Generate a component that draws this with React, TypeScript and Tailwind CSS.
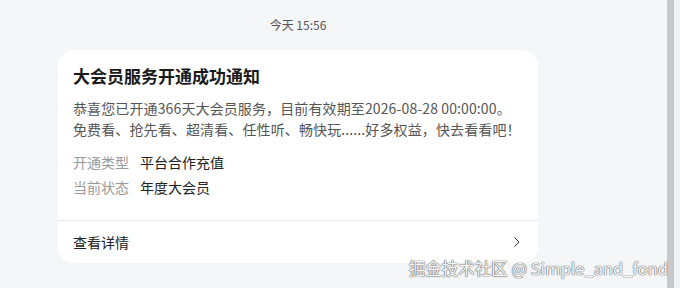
import React from "react";

const font = { fontFamily: '"Noto Sans CJK SC", "Noto Sans", sans-serif' };

export default function App() {
  return (
    <div
      className="relative flex h-[288px] w-[680px] overflow-hidden bg-[#f5f6f8]"
      style={font}
    >
      <div className="w-[667px] shrink-0">
        <div className="ml-[58px] w-[480px] pt-[17px] text-center text-[12px] leading-[16px] text-[#555]">
          今天 15:56
        </div>
        <div className="ml-[58px] mt-[17px] w-[480px] rounded-[16px] bg-white">
          <div className="px-[15px] pb-[20px]">
            <div className="pt-[14px] text-[17px] font-bold leading-[24px] text-[#1a1a1a]">
              大会员服务开通成功通知
            </div>
            <div className="mt-[10px] text-[14px] leading-[21px] tracking-[0.12px] text-[#555]">
              <div>恭喜您已开通366天大会员服务，目前有效期至2026-08-28 00:00:00。</div>
              <div>免费看、抢先看、超清看、任性听、畅快玩......好多权益，快去看看吧！</div>
            </div>
            <div className="mt-[10px] text-[14px] leading-[25px]">
              <div className="flex">
                <span className="w-[67px] text-[#999]">开通类型</span>
                <span className="text-[#222]">平台合作充值</span>
              </div>
              <div className="flex">
                <span className="w-[67px] text-[#999]">当前状态</span>
                <span className="text-[#222]">年度大会员</span>
              </div>
            </div>
          </div>
          <div className="flex h-[43px] items-center justify-between border-t border-[#e8e8e8] pl-[15px] pr-[17px] text-[14px] text-[#222]">
            <span>查看详情</span>
            <svg width="8" height="12" viewBox="0 0 8 12" fill="none">
              <path d="M1.5 1.5 L6 6 L1.5 10.5" stroke="#333" strokeWidth="1" />
            </svg>
          </div>
        </div>
      </div>
      <div className="w-[7px] shrink-0 bg-[#c6c8cc]" />
      <div className="flex-1 bg-[#eef3f5]" />
      <div className="absolute bottom-[10px] right-[12px] text-[16.5px] leading-[20px] text-[#f8f8f8] [text-shadow:0_0_1px_#666,0_0_1px_#666,0_0_1px_#666]">
        掘金技术社区 @ Simple_and_fond
      </div>
    </div>
  );
}
